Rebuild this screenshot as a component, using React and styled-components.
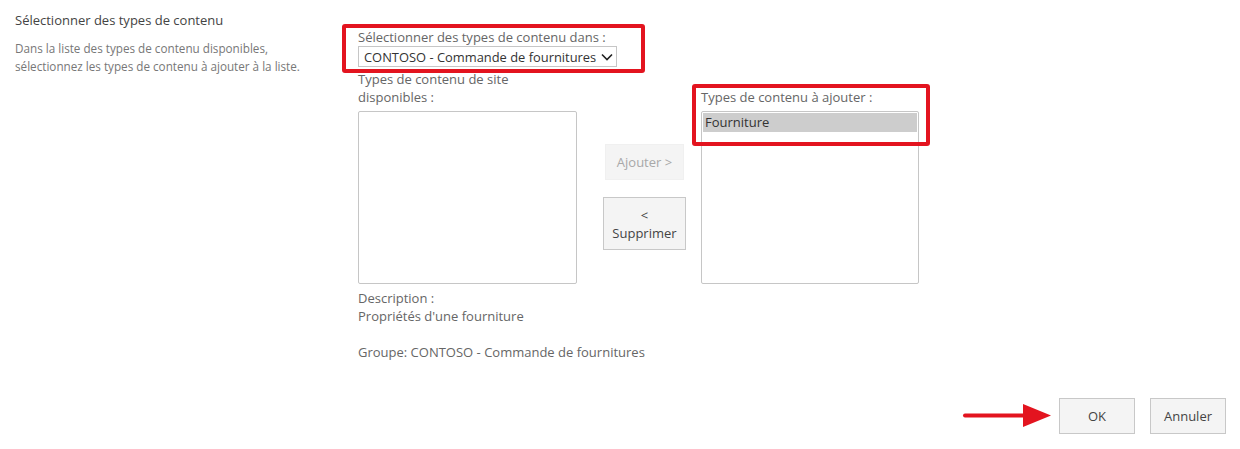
import React from "react";
import styled, { createGlobalStyle } from "styled-components";

const Global = createGlobalStyle`
  html, body { margin: 0; padding: 0; background: #fff; }
  body { font-family: "Open Sans", "Segoe UI", sans-serif; color: #444; }
  * { box-sizing: border-box; }
`;

const Page = styled.div`
  width: 1240px;
  height: 449px;
  display: flex;
  flex-direction: column;
  padding: 11px 14px 0 15px;
`;

const Section = styled.div`
  display: flex;
`;

const Intro = styled.div`
  width: 343px;
  flex: none;
`;

const Title = styled.div`
  font-size: 13px;
  line-height: 18px;
  color: #444;
`;

const Help = styled.div`
  margin-top: 10px;
  font-size: 11.7px;
  line-height: 18px;
  color: #777;
`;

const Main = styled.div`
  display: flex;
  flex-direction: column;
  align-items: flex-start;
  padding-top: 17px;
`;

const Highlight = styled.div`
  position: relative;
`;

const RedBox = styled.div`
  position: absolute;
  border: 4.5px solid #e3141f;
  border-radius: 3px;
  pointer-events: none;
  left: ${(p) => p.$l}px;
  top: ${(p) => p.$t}px;
  right: ${(p) => p.$r}px;
  bottom: ${(p) => p.$b}px;
`;

const Label = styled.div`
  font-size: 13px;
  line-height: 18px;
  color: #666;
  width: ${(p) => p.$w || "auto"};
`;

const Select = styled.div`
  width: 259px;
  height: 21px;
  border: 1px solid #c6c6c6;
  display: flex;
  align-items: center;
  gap: 5px;
  padding: 0 5px 0 5px;
  font-size: 12.9px;
  color: #333;
  background: #fff;
  white-space: nowrap;
`;

const ChevronSvg = styled.svg`
  flex: none;
  display: block;
`;

const Chevron = () => (
  <ChevronSvg width="12" height="8" viewBox="0 0 12 8">
    <path d="M1 1.5 L6 6.5 L11 1.5" fill="none" stroke="#222" strokeWidth="1.6" />
  </ChevronSvg>
);

const Picker = styled.div`
  display: flex;
  align-items: flex-end;
  margin-top: 3px;
`;

const ListCol = styled.div`
  display: flex;
  flex-direction: column;
  width: ${(p) => p.$w}px;
`;

const ListBox = styled.div`
  margin-top: 5px;
  height: 173px;
  border: 1px solid #c6c6c6;
  border-radius: 2px;
  padding: 1px;
  background: #fff;
`;

const Item = styled.div`
  height: 19px;
  line-height: 19px;
  padding-left: 2px;
  font-size: 13px;
  color: #333;
  background: ${(p) => (p.$selected ? "#cdcdcd" : "transparent")};
`;

const Mover = styled.div`
  width: 124px;
  align-self: flex-start;
  display: flex;
  flex-direction: column;
  align-items: center;
  gap: 17px;
  margin-top: 74px;
  padding-left: 11px;
`;

const MoveButton = styled.button`
  font-family: inherit;
  font-size: 13px;
  line-height: 18px;
  width: ${(p) => p.$w}px;
  height: ${(p) => p.$h}px;
  padding: 0;
  background: #f4f4f4;
  border: 1px solid ${(p) => (p.disabled ? "#f0f0f0" : "#c8c8c8")};
  color: ${(p) => (p.disabled ? "#a8a8a8" : "#444")};
  border-radius: 0;
`;

const Details = styled.div`
  margin-top: 5px;
  font-size: 13px;
  line-height: 18px;
  color: #666;
`;

const Spacer = styled.div`
  height: 18px;
`;

const Footer = styled.div`
  margin-top: auto;
  margin-bottom: 15px;
  display: flex;
  justify-content: flex-end;
  align-items: center;
  gap: 15px;
`;

const ActionButton = styled.button`
  font-family: inherit;
  font-size: 13px;
  width: 76px;
  height: 36px;
  background: #f4f4f4;
  border: 1px solid #c8c8c8;
  color: #444;
  padding: 0;
`;

const Arrow = styled.svg`
  display: block;
  margin-right: -9px;
`;

export default function App() {
  return (
    <>
      <Global />
      <Page>
        <Section>
          <Intro>
            <Title>Sélectionner des types de contenu</Title>
            <Help>
              Dans la liste des types de contenu disponibles,
              <br />
              sélectionnez les types de contenu à ajouter à la liste.
            </Help>
          </Intro>
          <Main>
            <Highlight>
              <Label>Sélectionner des types de contenu dans :</Label>
              <Select>
                <span>CONTOSO - Commande de fournitures</span>
                <Chevron />
              </Select>
              <RedBox $l={-16} $t={-4} $r={-28} $b={-6} />
            </Highlight>
            <Picker>
              <ListCol $w={219}>
                <Label $w="160px">Types de contenu de site disponibles :</Label>
                <ListBox />
              </ListCol>
              <Mover>
                <MoveButton disabled $w={79} $h={36}>
                  Ajouter &gt;
                </MoveButton>
                <MoveButton $w={83} $h={53}>
                  &lt;
                  <br />
                  Supprimer
                </MoveButton>
              </Mover>
              <ListCol $w={218}>
                <Highlight>
                  <Label>Types de contenu à ajouter :</Label>
                  <ListBox>
                    <Item $selected>Fourniture</Item>
                  </ListBox>
                  <RedBox $l={-9} $t={-4} $r={-11} $b={138} />
                </Highlight>
              </ListCol>
            </Picker>
            <Details>
              Description :
              <br />
              Propriétés d'une fourniture
              <Spacer />
              Groupe: CONTOSO - Commande de fournitures
            </Details>
          </Main>
        </Section>
        <Footer>
          <Arrow width="92" height="26" viewBox="0 0 92 26">
            <path d="M4 12.5 H64" stroke="#e3141f" strokeWidth="4" strokeLinecap="round" />
            <path d="M62 1 L90 12.5 L62 24 Z" fill="#e3141f" />
          </Arrow>
          <ActionButton>OK</ActionButton>
          <ActionButton>Annuler</ActionButton>
        </Footer>
      </Page>
    </>
  );
}
